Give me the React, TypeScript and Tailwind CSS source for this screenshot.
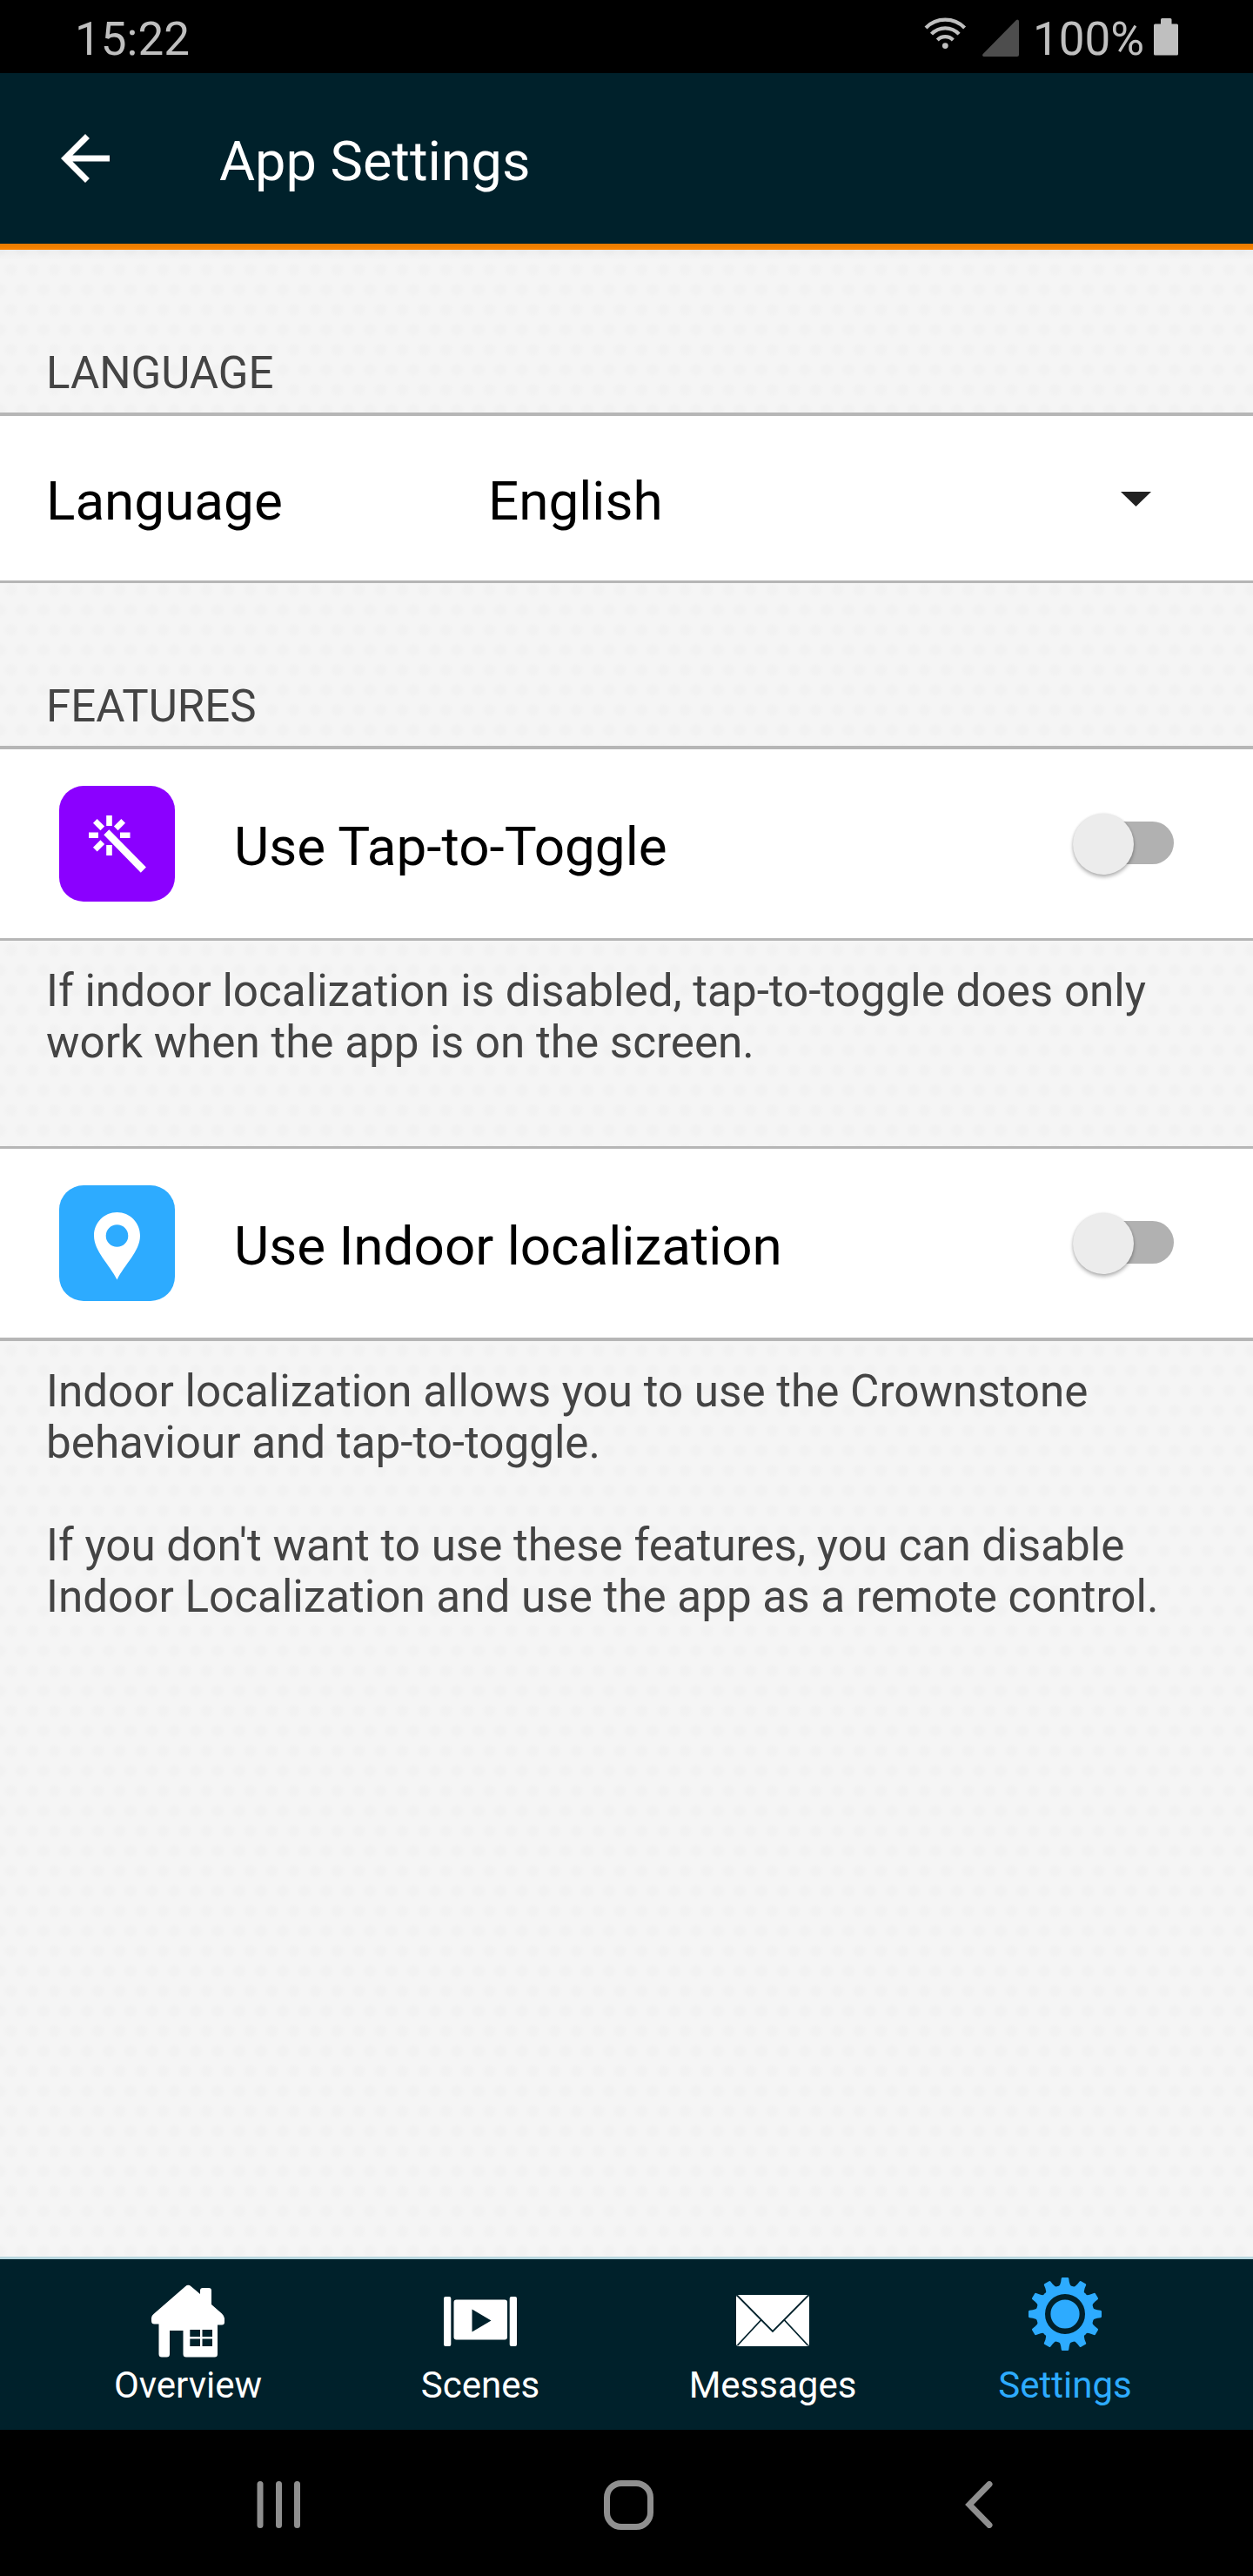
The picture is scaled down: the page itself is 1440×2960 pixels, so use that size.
import type { ReactNode } from "react";

function StatusBar() {
  return (
    <div className="flex h-[84px] items-start bg-black text-[#bfbfbf]">
      <span className="ml-[86px] mt-3.5 text-[53px] leading-[62px]">15:22</span>
      <svg className="ml-auto" width="378" height="84" viewBox="1062 0 378 84">
        <g fill="none" stroke="#bfbfbf" strokeWidth="4.2">
          <path d="M1064 32A31.4 31.4 0 0 1 1108.6 32" />
          <path d="M1070.5 39.2A21.5 21.5 0 0 1 1102.1 39.2" />
          <path d="M1077.3 46A12.6 12.6 0 0 1 1095.3 46" />
        </g>
        <circle cx="1086.3" cy="52.6" r="3.4" fill="#bfbfbf" />
        <path d="M1169 22.6a2 2 0 0 1 2 2V63a2 2 0 0 1-2 2h-38a1.7 1.7 0 0 1-1.3-3L1167.5 23.4Z" fill="#4d4d4d" />
        <text x="1187" y="63" fontSize="53" fill="#bfbfbf">100%</text>
        <path d="M1334 22.5a1.5 1.5 0 0 1 1.5-1.5h9.500a1.500 1.500 0 0 1 1.500 1.500V27.500h6a1.500 1.500 0 0 1 1.500 1.500V62a1.500 1.500 0 0 1-1.500 1.500h-25a1.500 1.500 0 0 1-1.500-1.500V29a1.500 1.500 0 0 1 1.500-1.500h6.500Z" fill="#bfbfbf" />
      </svg>
    </div>
  );
}

function Header() {
  return (
    <header>
      <div className="flex h-[196px] items-start bg-[#00212b] text-white">
        <svg className="ml-14 mt-14" width="84" height="84" viewBox="0 0 24 24" fill="white">
          <path d="M20 11H7.83l5.59-5.59L12 4l-8 8 8 8 1.410-1.410L7.830 13H20v-2z" />
        </svg>
        <h1 className="ml-[112px] mt-[65px] text-[63px] leading-[74px]">App Settings</h1>
      </div>
      <div className="h-[7px] bg-linear-to-b from-[#e67a00] to-[#fb8400]" />
    </header>
  );
}

function Row({ className, children }: { className: string; children: ReactNode }) {
  return (
    <div className={`flex items-center border-[#b6b6b6] bg-white text-[62px] leading-[72px] text-black ${className}`}>
      {children}
    </div>
  );
}

function Toggle() {
  return (
    <div className="relative mb-0.5 ml-auto mr-[91px] h-[49px] w-[110px] rounded-full bg-[#b1b1b1]">
      <div className="absolute -left-1.5 -top-[9px] size-[70px] rounded-full bg-[#ececec] shadow-[0_3px_4px_rgba(0,0,0,0.28),0_0_3px_rgba(0,0,0,0.12)]" />
    </div>
  );
}

function WandIcon() {
  return (
    <svg width="133" height="133" viewBox="0 0 133 133">
      <path
        d="M57.500 34V46M57.500 68V80M34 56.700H45M70 56.700H81.500M41.300 40.300L49.800 48.800M73.700 40.300L65.200 48.800M41.300 73.200L49.800 64.700"
        stroke="white"
        strokeWidth="6.600"
      />
      <path d="M57.300 50.300L51.300 56.300L93.800 99.700L99.900 93.400Z" fill="white" />
    </svg>
  );
}

function PinIcon() {
  return (
    <svg width="133" height="133" viewBox="0 0 133 133">
      <path
        fill="white"
        fillRule="evenodd"
        d="M66.500 31C51.800 31 40 42.900 40 57.700C40 76 58 91 66.500 108.500C75 91 93 76 93 57.700C93 42.900 81.200 31 66.500 31ZM66.500 45.200a12.800 12.800 0 1 1 0 25.600a12.800 12.800 0 1 1 0-25.600Z"
      />
    </svg>
  );
}

function HouseIcon() {
  return (
    <svg width="84" height="84" viewBox="0 0 84 84">
      <path
        fill="white"
        fillRule="evenodd"
        d="M39 2.200Q42.300-.6 45.600 2.200L56 11V7Q56 4 59 4H66Q69 4 69 7V23L81 33.500Q84 36.500 84 39V43.500Q84 46.500 81 46.500H76V80Q76 83.500 72.500 83.500H40Q36.500 83.500 36.500 80V53H21V80Q21 83.500 17.500 83.500H12Q8.500 83.500 8.500 80V45.500H3.500Q0 45.500 0 42V38.500Q0 36 2.500 34ZM44.300 52V60H56V52ZM58.500 52V60H70V52ZM44.300 62.500V71H56V62.500ZM58.500 62.500V71H70V62.500Z"
      />
    </svg>
  );
}

function ScenesIcon() {
  return (
    <svg width="84" height="84" viewBox="0 0 84 84" fill="white">
      <rect x="0" y="14" width="8.300" height="57" rx="2" />
      <rect x="75.700" y="14" width="8.300" height="57" rx="2" />
      <path fillRule="evenodd" d="M14.500 17.500H70Q73 17.500 73 20.500V60.500Q73 63.500 70 63.500H14.500Q11.500 63.500 11.500 60.500V20.500Q11.500 17.500 14.500 17.500ZM32.500 28.500V54.500L54.500 41.500Z" />
    </svg>
  );
}

function MailIcon() {
  return (
    <svg width="84" height="84" viewBox="0 0 84 84">
      <rect x="0" y="12" width="84" height="59" rx="3" fill="white" />
      <path d="M1 12.500L42 54L83 12.500M1.500 70L28.500 41M82.500 70L55.500 41" fill="none" stroke="#00212b" strokeWidth="1.800" />
    </svg>
  );
}

const TEETH = [0, 30, 60, 90, 120, 150, 180, 210, 240, 270, 300, 330];

function GearIcon() {
  return (
    <svg width="84" height="84" viewBox="0 0 84 84">
      <g fill="#2dabff">
        <circle cx="42" cy="42" r="33.300" />
        {TEETH.map((angle) => (
          <path key={angle} d="M34.500 11Q36.600 8.500 37.200 5L37.700 1.200Q37.900 0 39 0H45Q46.100 0 46.300 1.200L46.800 5Q47.400 8.500 49.500 11Z" transform={`rotate(${angle} 42 42)`} />
        ))}
      </g>
      <circle cx="42" cy="42" r="19.800" fill="#2dabff" stroke="#00212b" strokeWidth="6.400" />
    </svg>
  );
}

function Tab({ icon, label, active }: { icon: ReactNode; label: string; active?: boolean }) {
  return (
    <div className={`flex w-[336px] flex-col items-center ${active ? "pt-[21px] text-[#2dabff]" : "pt-[29px] text-white"}`}>
      {icon}
      <span className={`text-[42px] leading-[50px] ${active ? "mt-[15px]" : "mt-[7px]"}`}>{label}</span>
    </div>
  );
}

export default function App() {
  return (
    <div className="flex h-[2960px] w-[1440px] flex-col overflow-hidden bg-black font-[Roboto,sans-serif]">
      <StatusBar />
      <Header />
      <main className="h-[2306px] bg-[#f5f5f5] bg-[radial-gradient(circle,#f2f2f2_0_4px,transparent_9px),radial-gradient(circle,#f2f2f2_0_4px,transparent_9px)] bg-[length:25px_46px] bg-[position:0_0,12.5px_23px] text-[51.2px] leading-[59px] text-[#444444]">
        <div className="h-3 bg-linear-to-b from-black/3 to-transparent" />
        <h2 className="pl-[53px] pt-[100px] text-[51px]">LANGUAGE</h2>
        <Row className="mt-4 h-[196px] border-t-4 border-b-3 pl-[53px]">
          <span className="w-[508px] pt-[7px]">Language</span>
          <span className="pt-[7px]">English</span>
          <svg className="mb-[-2px] ml-auto mr-[117px]" width="35" height="17" viewBox="0 0 35 17">
            <path d="M0 0H35L17.500 17Z" fill="#212121" />
          </svg>
        </Row>
        <h2 className="pl-[53px] pt-28 text-[51px]">FEATURES</h2>
        <Row className="mt-4 h-[224px] border-t-4 border-b-3 pl-[68px]">
          <div className="mr-[68px] size-[133px] rounded-[28px] bg-[#8b00ff]">
            <WandIcon />
          </div>
          <span className="pt-[7px]">Use Tap-to-Toggle</span>
          <Toggle />
        </Row>
        <p className="h-[236px] pl-[53px] pt-7">
          If indoor localization is disabled, tap-to-toggle does only
          <br />
          work when the app is on the screen.
        </p>
        <Row className="h-[224px] border-t-3 border-b-4 pl-[68px]">
          <div className="mr-[68px] size-[133px] rounded-[28px] bg-[#2dabff]">
            <PinIcon />
          </div>
          <span className="pt-[7px]">Use Indoor localization</span>
          <Toggle />
        </Row>
        <p className="pl-[53px] pt-7">
          Indoor localization allows you to use the Crownstone
          <br />
          behaviour and tap-to-toggle.
          <br />
          <br />
          If you don't want to use these features, you can disable
          <br />
          Indoor Localization and use the app as a remote control.
        </p>
      </main>
      <nav className="flex h-[199px] border-t-3 border-[#b9d8e0] bg-[#00212b] px-12">
        <Tab icon={<HouseIcon />} label="Overview" />
        <Tab icon={<ScenesIcon />} label="Scenes" />
        <Tab icon={<MailIcon />} label="Messages" />
        <Tab icon={<GearIcon />} label="Settings" active />
      </nav>
      <div className="flex h-[168px] items-center bg-black pb-0.5 pt-1.5">
        <svg className="ml-[295px]" width="50" height="54" viewBox="0 0 50 54" fill="#8f8f8f">
          <rect x="0.500" width="7" height="54" rx="3.500" />
          <rect x="22" width="7" height="54" rx="3.500" />
          <rect x="43" width="7" height="54" rx="3.500" />
        </svg>
        <div className="ml-[349px] size-[57px] rounded-[20px] border-7 border-[#8f8f8f]" />
        <svg className="ml-[357px]" width="34" height="54" viewBox="0 0 34 54" fill="none" stroke="#8f8f8f" strokeWidth="7" strokeLinecap="round">
          <path d="M29 3.500L6 27L29 50.500" />
        </svg>
      </div>
    </div>
  );
}
